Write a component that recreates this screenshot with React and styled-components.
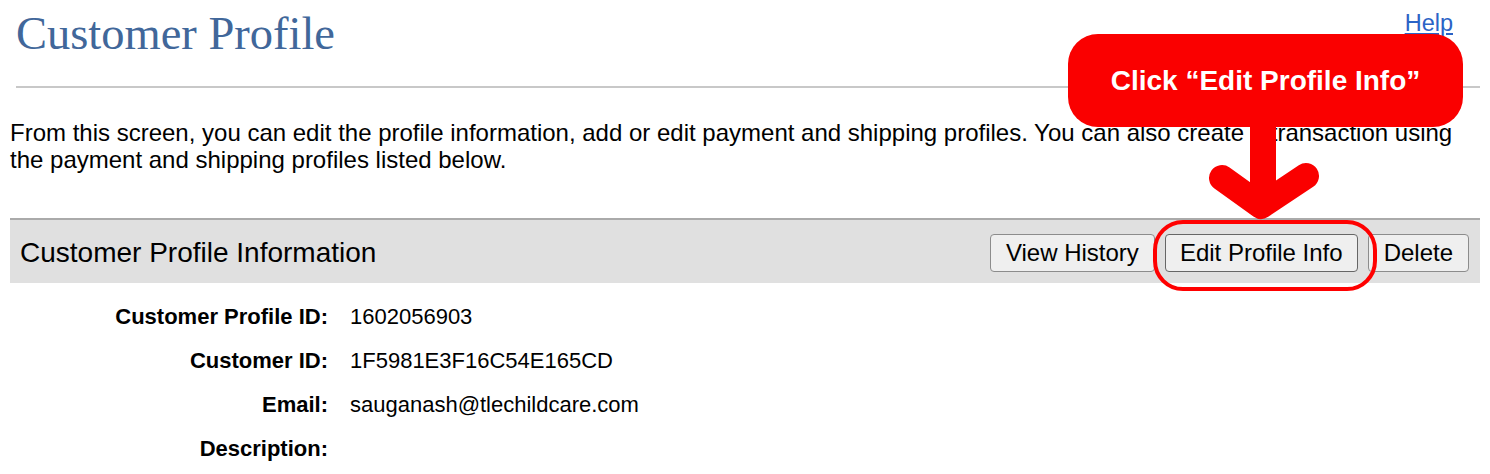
import React from 'react';
import styled, { createGlobalStyle } from 'styled-components';

const GlobalStyle = createGlobalStyle`
  body {
    margin: 0;
    background: #fff;
    font-family: 'Liberation Sans', Arial, sans-serif;
    color: #000;
  }
`;

const Page = styled.div`
  position: relative;
  width: 1490px;
  height: 474px;
  overflow: hidden;
  padding: 0 10px;
  box-sizing: border-box;
`;

const Header = styled.div`
  display: flex;
  justify-content: space-between;
  align-items: flex-start;
  margin-left: 6px;
  padding: 8px 27px 0 0;
  height: 88px;
  box-sizing: border-box;
  border-bottom: 2px solid #c8c8c8;
`;

const Title = styled.h1`
  margin: 0;
  font-family: Georgia, 'Liberation Serif', serif;
  font-weight: normal;
  font-size: 46.5px;
  line-height: 52px;
  color: #41679a;
`;

const HelpLink = styled.a`
  margin-top: 1px;
  font-size: 23.5px;
  line-height: 28px;
  color: #2b63c6;
  text-decoration: underline;
`;

const Intro = styled.p`
  margin: 31px 0 0;
  padding-right: 10px;
  font-size: 24px;
  line-height: 27px;
`;

const Panel = styled.div`
  margin-top: 45px;
  width: 1470px;
  height: 65px;
  box-sizing: border-box;
  border-top: 2px solid #aaa;
  background: #e0e0e0;
  display: flex;
  align-items: center;
  justify-content: space-between;
  padding: 3px 11px 0 10px;
`;

const PanelTitle = styled.div`
  font-size: 28px;
`;

const Buttons = styled.div`
  display: flex;
  gap: 10px;
  align-items: center;
`;

const Button = styled.button`
  height: 38px;
  padding: 0 ${(p) => p.$pad || 15}px;
  font-family: 'Liberation Sans', Arial, sans-serif;
  font-size: 24px;
  color: #000;
  background: #efefef;
  border: 1px solid ${(p) => (p.$dark ? '#666' : '#8c8c8c')};
  border-radius: 4px;
`;

const Details = styled.div`
  display: grid;
  grid-template-columns: 318px auto;
  column-gap: 22px;
  row-gap: 20px;
  margin-top: 22px;
  font-size: 22px;
  line-height: 24px;
`;

const Label = styled.div`
  text-align: right;
  font-weight: bold;
`;

const Value = styled.div``;

const Callout = styled.div`
  position: absolute;
  left: 1068px;
  top: 34px;
  width: 395px;
  height: 93px;
  border-radius: 30px;
  background: #fa0000;
  color: #fff;
  font-weight: bold;
  font-size: 28px;
  display: flex;
  align-items: center;
  justify-content: center;
`;

const Ring = styled.div`
  position: absolute;
  left: 1153px;
  top: 220px;
  width: 224px;
  height: 71px;
  box-sizing: border-box;
  border: 4px solid #f00;
  border-radius: 30px;
`;

const Arrow = styled.svg`
  position: absolute;
  left: 0;
  top: 0;
  pointer-events: none;
`;

const rows = [
  ['Customer Profile ID:', '1602056903'],
  ['Customer ID:', '1F5981E3F16C54E165CD'],
  ['Email:', 'sauganash@tlechildcare.com'],
  ['Description:', ''],
];

export default function App() {
  return (
    <>
      <GlobalStyle />
      <Page>
        <Header>
          <Title>Customer Profile</Title>
          <HelpLink href="#">Help</HelpLink>
        </Header>
        <Intro>
          From this screen, you can edit the profile information, add or edit payment and shipping
          profiles. You can also create a transaction using the payment and shipping profiles listed
          below.
        </Intro>
        <Panel>
          <PanelTitle>Customer Profile Information</PanelTitle>
          <Buttons>
            <Button $pad={15}>View History</Button>
            <Button $pad={14} $dark>Edit Profile Info</Button>
            <Button $pad={15}>Delete</Button>
          </Buttons>
        </Panel>
        <Details>
          {rows.map(([k, v]) => (
            <React.Fragment key={k}>
              <Label>{k}</Label>
              <Value>{v}</Value>
            </React.Fragment>
          ))}
        </Details>
        <Ring />
        <Arrow width="1490" height="474">
          <path
            d="M1263 120 L1263 198 M1222 178 L1261 206 L1306 176"
            fill="none"
            stroke="#fa0000"
            strokeWidth="26"
            strokeLinecap="round"
            strokeLinejoin="round"
          />
        </Arrow>
        <Callout>Click “Edit Profile Info”</Callout>
      </Page>
    </>
  );
}
